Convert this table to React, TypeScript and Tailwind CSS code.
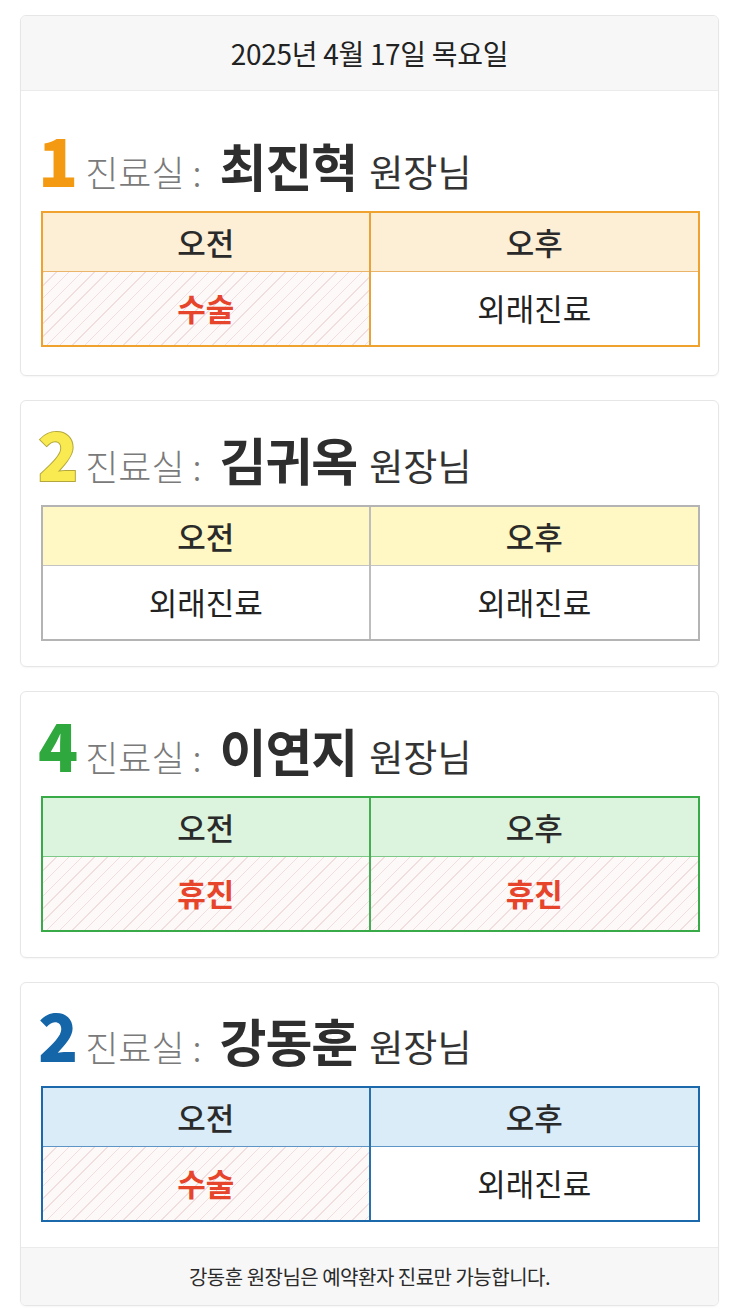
import React from "react";

type Theme = {
  num: string;
  numClass: string;
  tableBorder: string;
  headBg: string;
  headLine: string;
  divider: string;
};

const themes: Record<string, Theme> = {
  orange: {
    num: "1",
    numClass: "text-[#f39a12]",
    tableBorder: "border-[#f0a22e]",
    headBg: "bg-[#fdefd6]",
    headLine: "border-b-[#eab56a]",
    divider: "border-r-[#e9a23a]",
  },
  yellow: {
    num: "2",
    numClass: "text-[#f8ea50] [-webkit-text-stroke:2px_#b3a63c] [paint-order:stroke_fill]",
    tableBorder: "border-[#b4b4b4]",
    headBg: "bg-[#fff8c4]",
    headLine: "border-b-[#c4c4c4]",
    divider: "border-r-[#bdbdbd]",
  },
  green: {
    num: "4",
    numClass: "text-[#2fa83d]",
    tableBorder: "border-[#38aa47]",
    headBg: "bg-[#dcf4de]",
    headLine: "border-b-[#7cc886]",
    divider: "border-r-[#45ad52]",
  },
  blue: {
    num: "2",
    numClass: "text-[#1565a9]",
    tableBorder: "border-[#1b68ab]",
    headBg: "bg-[#d9ecf8]",
    headLine: "border-b-[#5d95c6]",
    divider: "border-r-[#2a70ad]",
  },
};

const hatch =
  "bg-[#fdf9f9] bg-[repeating-linear-gradient(135deg,#f1dede_0px,#f1dede_1px,transparent_1px,transparent_9px)]";

function Cell({ text, special }: { text: string; special: boolean }) {
  return (
    <div
      className={`h-[73px] flex items-center justify-center text-[31px] ${
        special ? `${hatch} text-[#e6452b] font-bold` : "bg-white text-[#222]"
      }`}
    >
      {text}
    </div>
  );
}

function Doctor({
  theme,
  name,
  am,
  pm,
  amSpecial,
  pmSpecial,
  topClass,
}: {
  theme: Theme;
  name: string;
  am: string;
  pm: string;
  amSpecial: boolean;
  pmSpecial: boolean;
  topClass: string;
}) {
  return (
    <div className="pl-5 pr-[18px]">
      <div className={`${topClass} flex items-end pb-[20px]`}>
        <div className="flex items-baseline leading-none">
          <span
            className={`text-[66px] font-black tracking-[-2px] -ml-[3px] mr-[9px] ${theme.numClass}`}
          >
            {theme.num}
          </span>
          <span className="text-[36px] font-light text-[#7a7a7a] mr-[18px]">
            진료실 :
          </span>
          <span className="text-[51px] font-bold text-[#2e2e2e] mr-[12px] tracking-[-1px]">
            {name}
          </span>
          <span className="text-[37px] text-[#333]">원장님</span>
        </div>
      </div>
      <div className={`border-2 ${theme.tableBorder} grid grid-cols-2`}>
        <div className={`border-r-2 ${theme.divider}`}>
          <div
            className={`h-[59px] flex items-center justify-center text-[31px] font-medium text-[#2a2a2a] border-b ${theme.headLine} ${theme.headBg}`}
          >
            오전
          </div>
          <Cell text={am} special={amSpecial} />
        </div>
        <div>
          <div
            className={`h-[59px] flex items-center justify-center text-[31px] font-medium text-[#2a2a2a] border-b ${theme.headLine} ${theme.headBg}`}
          >
            오후
          </div>
          <Cell text={pm} special={pmSpecial} />
        </div>
      </div>
    </div>
  );
}

export default function App() {
  return (
    <div
      className="bg-white min-h-[1313px] pl-5 pr-[19px] pt-[15px] flex flex-col gap-[24px]"
      style={{ fontFamily: '"Noto Sans CJK KR", "Noto Sans", sans-serif' }}
    >
      <div className="border border-[#e6e6e6] rounded-[6px] overflow-hidden shadow-[0_1px_2px_rgba(0,0,0,0.04)] pb-[28px]">
        <div className="h-[75px] bg-[#f7f7f7] border-b border-[#ebebeb] flex items-center justify-center text-[28px] text-[#222] tracking-[-0.3px]">
          2025년 4월 17일 목요일
        </div>
        <Doctor
          theme={themes.orange}
          name="최진혁"
          am="수술"
          pm="외래진료"
          amSpecial
          pmSpecial={false}
          topClass="h-[120px]"
        />
      </div>

      <div className="border border-[#e6e6e6] rounded-[6px] overflow-hidden shadow-[0_1px_2px_rgba(0,0,0,0.04)] pb-[25px]">
        <Doctor
          theme={themes.yellow}
          name="김귀옥"
          am="외래진료"
          pm="외래진료"
          amSpecial={false}
          pmSpecial={false}
          topClass="h-[104px]"
        />
      </div>

      <div className="border border-[#e6e6e6] rounded-[6px] overflow-hidden shadow-[0_1px_2px_rgba(0,0,0,0.04)] pb-[25px]">
        <Doctor
          theme={themes.green}
          name="이연지"
          am="휴진"
          pm="휴진"
          amSpecial
          pmSpecial
          topClass="h-[104px]"
        />
      </div>

      <div className="border border-[#e6e6e6] rounded-[6px] overflow-hidden shadow-[0_1px_2px_rgba(0,0,0,0.04)]">
        <Doctor
          theme={themes.blue}
          name="강동훈"
          am="수술"
          pm="외래진료"
          amSpecial
          pmSpecial={false}
          topClass="h-[103px]"
        />
        <div className="mt-[25px] h-[58px] bg-[#f7f7f7] border-t border-[#ebebeb] flex items-center justify-center text-[20px] text-[#2a2a2a] tracking-[-0.5px]">
          강동훈 원장님은 예약환자 진료만 가능합니다.
        </div>
      </div>
    </div>
  );
}
